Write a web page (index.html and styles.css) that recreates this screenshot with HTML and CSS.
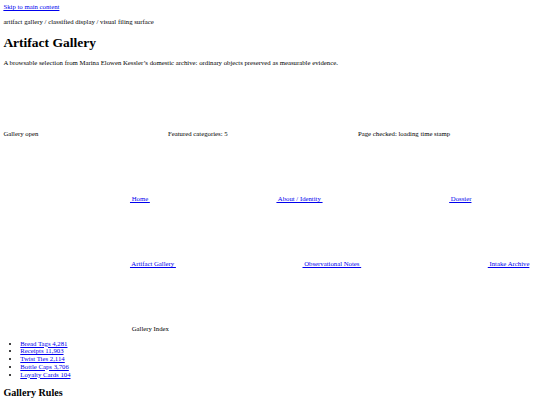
FILE: index.html
```html
<!DOCTYPE html>
<html lang="en">
<head>
<meta charset="utf-8">
<title>Artifact Gallery</title>
<link rel="stylesheet" href="styles.css">
</head>
<body>
<a class="skip" href="#main">Skip to main content</a>
<header class="masthead">
  <p class="crumbs">artifact gallery / classified display / visual filing surface</p>
  <h1 class="title">Artifact Gallery</h1>
  <p class="lede">A browsable selection from Marina Elowen Kessler’s domestic archive: ordinary objects preserved as measurable evidence.</p>
</header>
<div class="status">
  <span class="status-item">Gallery open</span>
  <span class="status-item">Featured categories: 5</span>
  <span class="status-item">Page checked: loading time stamp</span>
</div>
<nav class="nav"><a href="#"><svg class="icon" viewBox="0 0 300 150" aria-hidden="true"></svg> Home </a><a href="#"><svg class="icon" viewBox="0 0 300 150" aria-hidden="true"></svg> About / Identity </a><a href="#"><svg class="icon" viewBox="0 0 300 150" aria-hidden="true"></svg> Dossier </a><a href="#"><svg class="icon" viewBox="0 0 300 150" aria-hidden="true"></svg> Artifact Gallery </a><a href="#"><svg class="icon" viewBox="0 0 300 150" aria-hidden="true"></svg> Observational Notes </a><a href="#"><svg class="icon" viewBox="0 0 300 150" aria-hidden="true"></svg> Intake Archive </a></nav>
<main id="main">
  <div class="index-label"><svg class="icon" viewBox="0 0 300 150" aria-hidden="true"></svg> Gallery Index</div>
  <ul class="index-list">
    <li><a href="#">Bread Tags 4,281</a></li>
    <li><a href="#">Receipts 11,903</a></li>
    <li><a href="#">Twist Ties 2,114</a></li>
    <li><a href="#">Bottle Caps 3,706</a></li>
    <li><a href="#">Loyalty Cards 104</a></li>
  </ul>
  <h2 class="section-title">Gallery Rules</h2>
</main>
</body>
</html>
```
FILE: styles.css
```css
html {
  background: #ffffff;
}
body {
  margin: 3.375px;
  font-family: "Liberation Serif", "Times New Roman", serif;
  font-size: 6.75px;
  line-height: 7.75px;
  color: #000000;
  background: #ffffff;
}
a {
  color: #0000ee;
}
.skip {
  color: #0000ee;
}
.crumbs {
  margin: 6.75px 0;
}
.title {
  font-size: 13.5px;
  line-height: 15.5px;
  font-weight: bold;
  margin: 9.05px 0;
}
.lede {
  margin: 6.75px 0;
}
.status {
  display: grid;
  grid-template-columns: 164.6px 190px 1fr;
  padding-top: 56.3px;
}
.nav {
  display: block;
}
.icon {
  width: 126.6px;
  height: 63.3px;
  vertical-align: baseline;
}
.index-list {
  margin: 6.75px 0;
  padding-left: 16.9px;
}
.section-title {
  font-size: 10.125px;
  line-height: 11.6px;
  font-weight: bold;
  margin: 8.4px 0;
}
```
